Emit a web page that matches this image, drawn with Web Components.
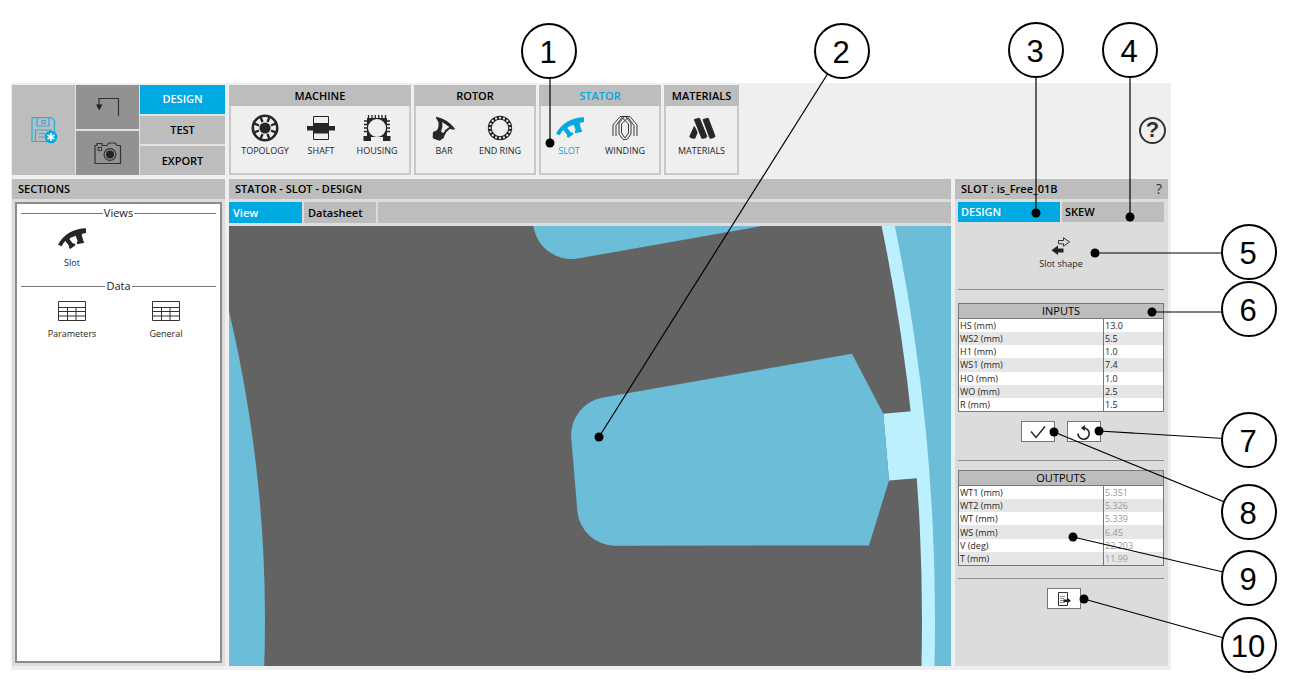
<!DOCTYPE html>
<html lang="en">
<head>
<meta charset="utf-8">
<title>Stator slot design</title>
<style>
  html, body { margin: 0; }
  body {
    background: #fff;
    color: #1a1a1a;
    font: 11px/14px "Open Sans", "Noto Sans", sans-serif;
    --accent: #00a9e0;
    --bar: #bdbdbd;
    --panel: #dcdcdc;
    --app: #efefef;
    --line: #8c8c8c;
  }
</style>
</head>
<body>
<motor-page></motor-page>

<script>
const define = (name, html, setup) => {
  const template = document.createElement('template');
  template.innerHTML = html;
  customElements.define(name, class extends HTMLElement {
    constructor() {
      super();
      this.attachShadow({ mode: 'open' }).append(template.content.cloneNode(true));
    }
    connectedCallback() { if (setup) setup(this, this.shadowRoot); }
  });
};

const spokes = (n, draw) => Array.from({ length: n }, (_, i) => draw(i * 360 / n)).join('');

const slotShape = `<path fill="currentColor" transform="scale(.3333)" d="M0 50Q28 2 84 1V15L73 17L71 21L76 38L79 44L58 49L56 43L59 39L53 23L38 29L34 33L44 46L51 47L53 51L37 63L33 59V53L22 39L17 44L11 55Z"/>`;

const icons = {
  save: [26, 28, `<g fill="none" stroke="#2aaee0" stroke-width="1.200"><path d="M1 1.600H20.500L23.500 4.600V25.500H1ZM6 1.600V10H18V1.600M4.500 25.500V14H20V16M11 4.500H14V7.500H11ZM7.500 17.500H14M7.500 21H13"/></g>
    <circle cx="20" cy="21" r="6.300" fill="#00a9e0"/><path d="M20 17V25M16.500 19L23.500 23M23.500 19L16.500 23" stroke="#fff" stroke-width="1.600"/>`],
  undo: [24, 20, `<path d="M3 12V1.500H22.500V19" fill="none" stroke="#333" stroke-width="1.200"/><path d="M0 7.500H6.500L3.200 13.500Z" fill="#222"/>`],
  camera: [28, 24, `<path d="M1 4.500H3V2.500H8V4.500H13L15 2H21L23 4.500H26.500V22.500H1Z" fill="none" stroke="#333" stroke-width="1.200"/>
    <path d="M4 6.500H7.500V9.500H4Z" fill="none" stroke="#333"/><circle cx="16" cy="13.500" r="5.900" fill="none" stroke="#333" stroke-width="1.200"/><circle cx="16" cy="13.500" r="4" fill="#222"/>`],
  topology: [28, 28, `<g stroke="currentColor" fill="none"><circle cx="14" cy="14" r="12.200" stroke-width="2.600"/>${spokes(8, a => `<path transform="rotate(${a + 22.5} 14 14)" d="M14 2V7.500" stroke-width="2.400"/>`)}</g>
    <circle cx="14" cy="14" r="5.600" fill="currentColor"/>`],
  shaft: [28, 28, `<path d="M6.500 2.500H21.500V25.500H6.500Z" fill="none" stroke="currentColor"/><path d="M6 9H22V12H28V16.500H22V19.500H6V16.500H0V12H6Z" fill="currentColor"/>`],
  housing: [28, 28, `<path fill="currentColor" fill-rule="evenodd" d="M4 4H24V22H27.500V27H20V23H8V27H.500V22H4ZM14 5A9 9 0 1 0 14 23A9 9 0 1 0 14 5Z"/>
    <path d="M5.500 1V4M9 1V4M12.300 1V4M15.700 1V4M19 1V4M22.500 1V4M1 7H4M1 10.500H4M1 14H4M1 17.500H4M24 7H27M24 10.500H27M24 14H27M24 17.500H27" stroke="currentColor" stroke-width="1.300"/>`],
  bar: [28, 28, `<path fill="currentColor" fill-rule="evenodd" transform="translate(2 2) scale(.3333)" d="M12 2Q46 8 69 38L66 41L53 39Q43 46 38 58L35 66L23 74L5 68L2 64L3 48L15 43Q22 32 19 18L12 6ZM31 18Q33 34 27 47L35 51Q39 40 52 33Z"/>`],
  ring: [28, 28, `<circle cx="14" cy="14" r="10.200" fill="none" stroke="currentColor" stroke-width="4"/>${spokes(16, a => `<circle transform="rotate(${a} 14 14)" cx="14" cy="3.800" r="1.100" fill="#efefef"/>`)}`],
  slot: [28, 28, `<g transform="translate(1 3)">${slotShape}</g>`],
  slotview: [28, 22, slotShape],
  winding: [28, 28, `<path fill="none" stroke="currentColor" stroke-width=".900" d="M2 22V11L9 2.500H14.500L20 9V20L16 25.500H12L8 20V9L13.500 2.500H19L26 11V22M5 22V11.500L11 3.500L17.500 10V19L14 24L10.500 19V10L17 3.500L23 11.500V22"/>`],
  materials: [28, 28, `<path fill="currentColor" stroke="currentColor" stroke-linejoin="round" d="M6.300 5.500L11.500 4.300L18.800 22.500L17.800 23.800L13.800 24.300ZM15 5.500L20.200 4.300L27 22.300L26 23.500L22 24.300ZM1.800 22.500L6.300 12.500L9.200 18.500L6.800 24.300L2.800 23.800Z"/>`],
  table: [28, 20, `<path fill="none" stroke="#333" d="M.500.500H27.500V19.500H.500ZM.500 6.500H27.500M.500 10.500H27.500M.500 15H27.500M9.500 6.500V19.500M18 6.500V19.500"/>`],
  swap: [20, 18, `<path fill="none" stroke="#333" d="M7.500 3.500H12.500V.800L18.500 5L12.500 9.200V6.800H7.500Z"/><path fill="#222" d="M12.500 11.500H7V8.500L.500 13.200L7 18V15.500H12.500Z"/>`],
  check: [16, 14, `<path d="M1 6.500L6 12.500L15 1.500" fill="none" stroke="#222" stroke-width="1.400"/>`],
  reset: [16, 16, `<path d="M2 9.500A5.600 5.600 0 1 0 7.600 4" fill="none" stroke="#222" stroke-width="1.600"/><path d="M9 1V7L4.800 4Z" fill="#222"/>`],
  exports: [14, 16, `<path d="M10.500 7V1.500H1.500V14.500H10.500V12" fill="none" stroke="#333"/><path d="M3 5.500H8M3 7.500H7M3 9.500H7M3 11.500H8" stroke="#777" stroke-width=".800"/><path d="M6.500 8.500H10V6.500L14 9.700L10 12.500V11H6.500Z" fill="#222"/>`],
};

define('app-icon', `<style>:host{display:block;line-height:0}svg{display:block;overflow:visible}</style><svg aria-hidden="true"></svg>`,
  (host, root) => {
    const [w, h, art] = icons[host.getAttribute('name')];
    const svg = root.querySelector('svg');
    svg.setAttribute('width', w);
    svg.setAttribute('height', h);
    svg.innerHTML = art;
  });

/* Icon above a caption, used in the ribbon and in the panels. */
define('tool-button', `<style>
  :host{display:block;width:56px;color:#262626}
  :host([active]){color:var(--accent)}
  :host([wide]){width:92px}
  button{display:flex;flex-direction:column;align-items:center;gap:3px;width:100%;padding:0;border:0;background:none;color:inherit;font:inherit;font-size:9px;line-height:12px;white-space:nowrap}
  :host([wide]) button{gap:7px}
</style><button type="button"><span><slot></slot></span></button>`,
  (host, root) => {
    const icon = document.createElement('app-icon');
    icon.setAttribute('name', host.getAttribute('icon'));
    root.querySelector('button').prepend(icon);
  });

define('ribbon-group', `<style>
  :host{display:flex;flex-direction:column;box-sizing:border-box;width:122px;border:2px solid #c8c8c8;border-top:0}
  :host([size=large]){width:182px}
  :host([size=small]){width:75px}
  h2{margin:0 -2px;background:var(--bar);font-size:11px;line-height:21px;font-weight:600;text-align:center;color:#000}
  :host([active]) h2{color:var(--accent)}
  div{display:flex;padding-top:8px}
  :host([size=large]) div{justify-content:center;padding-left:2px}
  :host([size=small]) div{justify-content:center}
</style><h2></h2><div><slot></slot></div>`,
  (host, root) => { root.querySelector('h2').textContent = host.getAttribute('heading'); });

define('top-bar', `<style>
  :host{display:grid;grid-template-columns:213px 1fr auto;gap:4px;height:90px}
  .file{display:grid;grid-template-columns:63px 63px 1fr;gap:1px;background:#e2e2e2}
  .stack{display:grid;grid-auto-rows:1fr;gap:2px}
  button{display:flex;align-items:center;justify-content:center;padding:0;border:0;background:var(--bar);font:inherit;font-weight:600;color:#000}
  .dark button{background:#929292}
  .stack .current{background:var(--accent);color:#fff}
  .groups{display:flex;gap:3px}
  .help{align-self:center;margin-right:2px;width:27px;height:27px;border:2px solid #333;border-radius:50%;background:none;font:bold 22px/22px "Liberation Sans",sans-serif;color:#333}
</style>
<div class="file">
  <button type="button" aria-label="Save"><app-icon name="save"></app-icon></button>
  <div class="stack dark">
    <button type="button" aria-label="Undo"><app-icon name="undo"></app-icon></button>
    <button type="button" aria-label="Capture"><app-icon name="camera"></app-icon></button>
  </div>
  <div class="stack">
    <button type="button" class="current">DESIGN</button>
    <button type="button">TEST</button>
    <button type="button">EXPORT</button>
  </div>
</div>
<div class="groups">
  <ribbon-group heading="MACHINE" size="large">
    <tool-button icon="topology">TOPOLOGY</tool-button><tool-button icon="shaft">SHAFT</tool-button><tool-button icon="housing">HOUSING</tool-button>
  </ribbon-group>
  <ribbon-group heading="ROTOR">
    <tool-button icon="bar">BAR</tool-button><tool-button icon="ring">END RING</tool-button>
  </ribbon-group>
  <ribbon-group heading="STATOR" active>
    <tool-button icon="slot" active>SLOT</tool-button><tool-button icon="winding">WINDING</tool-button>
  </ribbon-group>
  <ribbon-group heading="MATERIALS" size="small">
    <tool-button icon="materials">MATERIALS</tool-button>
  </ribbon-group>
</div>
<button type="button" class="help">?</button>`);

define('side-panel', `<style>
  :host{display:flex;flex-direction:column;min-width:0;background:var(--panel)}
  header{display:flex;justify-content:space-between;padding:0 6px;background:var(--bar);color:#000;font-size:11px;line-height:20px}
  h2{margin:0;font:inherit;font-weight:600}
</style><header><h2></h2><slot name="action"></slot></header><slot></slot>`,
  (host, root) => { root.querySelector('h2').textContent = host.getAttribute('heading'); });

define('section-list', `<style>
  :host{display:block;flex:1;margin:3px;border:2px solid var(--line);background:#fff;padding:2px 4px}
  section{height:73px}
  h3{display:flex;align-items:center;gap:1px;margin:0;font-size:11px;line-height:14px;font-weight:400}
  h3::before,h3::after{content:"";flex:1;border-top:1px solid #777}
  div{display:flex;padding:8px 0 0 5px;gap:2px}
</style>
<section><h3>Views</h3><div><tool-button wide icon="slotview">Slot</tool-button></div></section>
<section><h3>Data</h3><div><tool-button wide icon="table">Parameters</tool-button><tool-button wide icon="table">General</tool-button></div></section>`);

/* Cross-section of the lamination: steel, slots and air gap. */
define('slot-view', `<style>
  :host{display:block;flex:1;min-height:0;position:relative;background:#636363}
  svg{position:absolute;inset:0;width:100%;height:100%}
</style>
<svg viewBox="229 226 722 440" preserveAspectRatio="xMidYMid slice" role="img" aria-label="Slot cross-section">
  <path fill="#6cbdd7" d="M-300 0H2000V1500H-300Z"/>
  <circle cx="-1018" cy="620" r="1953" fill="#bdf0ff"/>
  <circle cx="-1018" cy="620" r="1940" fill="#636363"/>
  <circle cx="-1078" cy="620" r="1343" fill="#6cbdd7"/>
  <path fill="#bdf0ff" d="M883.300 413.700L914 411.100L920 478L889 480.500Z"/>
  <path fill="#6cbdd7" d="M603 397.600L852 353.700L883.300 413.700L889 480.500L869 545.500L614.700 545.700A38 38 0 0 1 577.400 511.700L571.200 437A38 38 0 0 1 603 397.600Z"/>
  <path fill="#6cbdd7" d="M533 218V222A38.500 38.500 0 0 0 577.700 258.500L762 226V200Z"/>
</svg>`);

define('value-table', `<style>
  :host{display:block}
  table{width:100%;height:109px;border-collapse:collapse;border:1px solid #777;background:#fff;table-layout:fixed;font-size:9px;line-height:11px;color:#262626}
  :host([readonly]) table{height:96px}
  th,td{height:13px;padding:0 1px;text-align:left;font-weight:400}
  thead th{height:14px;background:var(--bar);border-bottom:1px solid #777;text-align:center;font-size:11px;line-height:14px;color:#000}
  tbody tr:nth-child(even){background:#e6e6e6}
  td{border-left:1px solid #777}
  col.value{width:60px}
  label,output{display:block}
  input{display:block;box-sizing:border-box;width:100%;height:11px;padding:0;border:0;background:none;font:inherit;color:inherit}
  output{color:#999}
</style>
<table><colgroup><col><col class="value"></colgroup><thead><tr><th colspan="2" scope="colgroup"></th></tr></thead><tbody></tbody></table>`,
  (host, root) => {
    const tag = host.hasAttribute('readonly') ? 'output' : 'input';
    root.querySelector('thead th').textContent = host.getAttribute('heading');
    host.getAttribute('rows').split(';').forEach((pair, i) => {
      const [name, value] = pair.split('=');
      const row = root.querySelector('tbody').insertRow();
      row.innerHTML = `<th scope="row"><label for="v${i}">${name}</label></th><td><${tag} id="v${i}"></${tag}></td>`;
      const field = row.querySelector(tag);
      if (tag === 'input') field.setAttribute('value', value);
      field.value = value;
    });
  });

define('slot-form', `<style>
  :host{display:block;padding:3px 4px 3px 3px}
  nav{display:grid;grid-template-columns:1fr 1fr;gap:2px}
  nav button{padding:0 3px;border:0;background:var(--bar);font:inherit;font-weight:600;line-height:20px;text-align:left;color:#000}
  nav .current{background:var(--accent);color:#fff}
  .shape{display:flex;justify-content:center;height:52px;padding-top:15px}
  hr{margin:0;border:0;border-top:1px solid var(--line)}
  .inputs{margin-top:13px}
  .actions{display:flex;justify-content:center;gap:12px;padding:9px 0 18px}
  .actions button{display:flex;align-items:center;justify-content:center;width:34px;height:21px;padding:0;border:1px solid #777;background:#fff}
  .export{padding-left:6px}
  .outputs{margin:9px 0 12px}
</style>
<nav><button type="button" class="current">DESIGN</button><button type="button">SKEW</button></nav>
<div class="shape"><tool-button icon="swap">Slot shape</tool-button></div>
<hr>
<value-table class="inputs" heading="INPUTS" rows="HS (mm)=13.0;WS2 (mm)=5.5;H1 (mm)=1.0;WS1 (mm)=7.4;HO (mm)=1.0;WO (mm)=2.5;R (mm)=1.5"></value-table>
<div class="actions"><button type="button" aria-label="Apply"><app-icon name="check"></app-icon></button><button type="button" aria-label="Restore"><app-icon name="reset"></app-icon></button></div>
<hr>
<value-table class="outputs" readonly heading="OUTPUTS" rows="WT1 (mm)=5.351;WT2 (mm)=5.326;WT (mm)=5.339;WS (mm)=6.45;V (deg)=22.203;T (mm)=11.99"></value-table>
<hr>
<div class="actions export"><button type="button" aria-label="Export"><app-icon name="exports"></app-icon></button></div>`);

define('view-tabs', `<style>
  :host{display:grid;grid-template-columns:73px 72px 1fr;gap:2px;margin:3px 0}
  button,span{padding:0 4px;border:0;background:var(--bar);font:inherit;font-weight:600;line-height:21px;text-align:left;color:#000}
  .current{background:var(--accent);color:#fff}
</style><button type="button" class="current">View</button><button type="button">Datasheet</button><span></span>`);

/* Numbered markers that point at places on the page. */
define('call-outs', `<style>
  :host{position:absolute;inset:0;pointer-events:none}
  svg{display:block;width:100%;height:100%;overflow:visible}
  text{font:31px "Liberation Sans",Arial,sans-serif;text-anchor:middle}
</style><svg></svg>`,
  (host, root) => {
    const marks = [
      [549, 51, 550, 143], [842, 51, 599, 437], [1036, 50, 1036, 213], [1130, 50, 1130, 217],
      [1249, 252, 1095, 253], [1249, 309, 1152, 312], [1249, 440, 1099, 431],
      [1249, 512, 1054, 432], [1249, 578, 1073, 537], [1249, 645, 1084, 599],
    ];
    /* Leaders that are almost upright or level are drawn exactly so. */
    root.querySelector('svg').innerHTML = marks.map(([x, y, tx, ty], i) => {
      const sx = Math.abs(x - tx) < 4 ? tx : x;
      const sy = Math.abs(y - ty) < 4 ? ty : y;
      return `<path d="M${sx} ${sy}L${tx} ${ty}" stroke="#000" stroke-width="1.200"/>
        <circle cx="${tx}" cy="${ty}" r="4.500"/>
        <circle cx="${x}" cy="${y}" r="27" fill="#fff" stroke="#000" stroke-width="2"/>
        <text x="${x - 1}" y="${y + 12}">${i + 1}</text>`;
    }).join('');
  });

define('motor-page', `<style>
  :host{display:flex;flex-direction:column;box-sizing:border-box;position:relative;min-height:100vh;padding:83px 122px 24px 11px}
  main{flex:1;display:flex;flex-direction:column;gap:4px;padding:2px 3px 4px 1px;background:var(--app)}
  .work{flex:1;display:grid;grid-template-columns:213px 1fr 213px;gap:4px}
  .hint{border:0;padding:0;background:none;font:14px/20px "Open Sans",sans-serif;color:#333}
</style>
<main>
  <top-bar></top-bar>
  <div class="work">
    <side-panel heading="SECTIONS"><section-list></section-list></side-panel>
    <side-panel heading="STATOR - SLOT - DESIGN"><view-tabs></view-tabs><slot-view></slot-view></side-panel>
    <side-panel heading="SLOT : is_Free_01B"><button slot="action" type="button" class="hint">?</button><slot-form></slot-form></side-panel>
  </div>
</main>
<call-outs></call-outs>`);
</script>
</body>
</html>
